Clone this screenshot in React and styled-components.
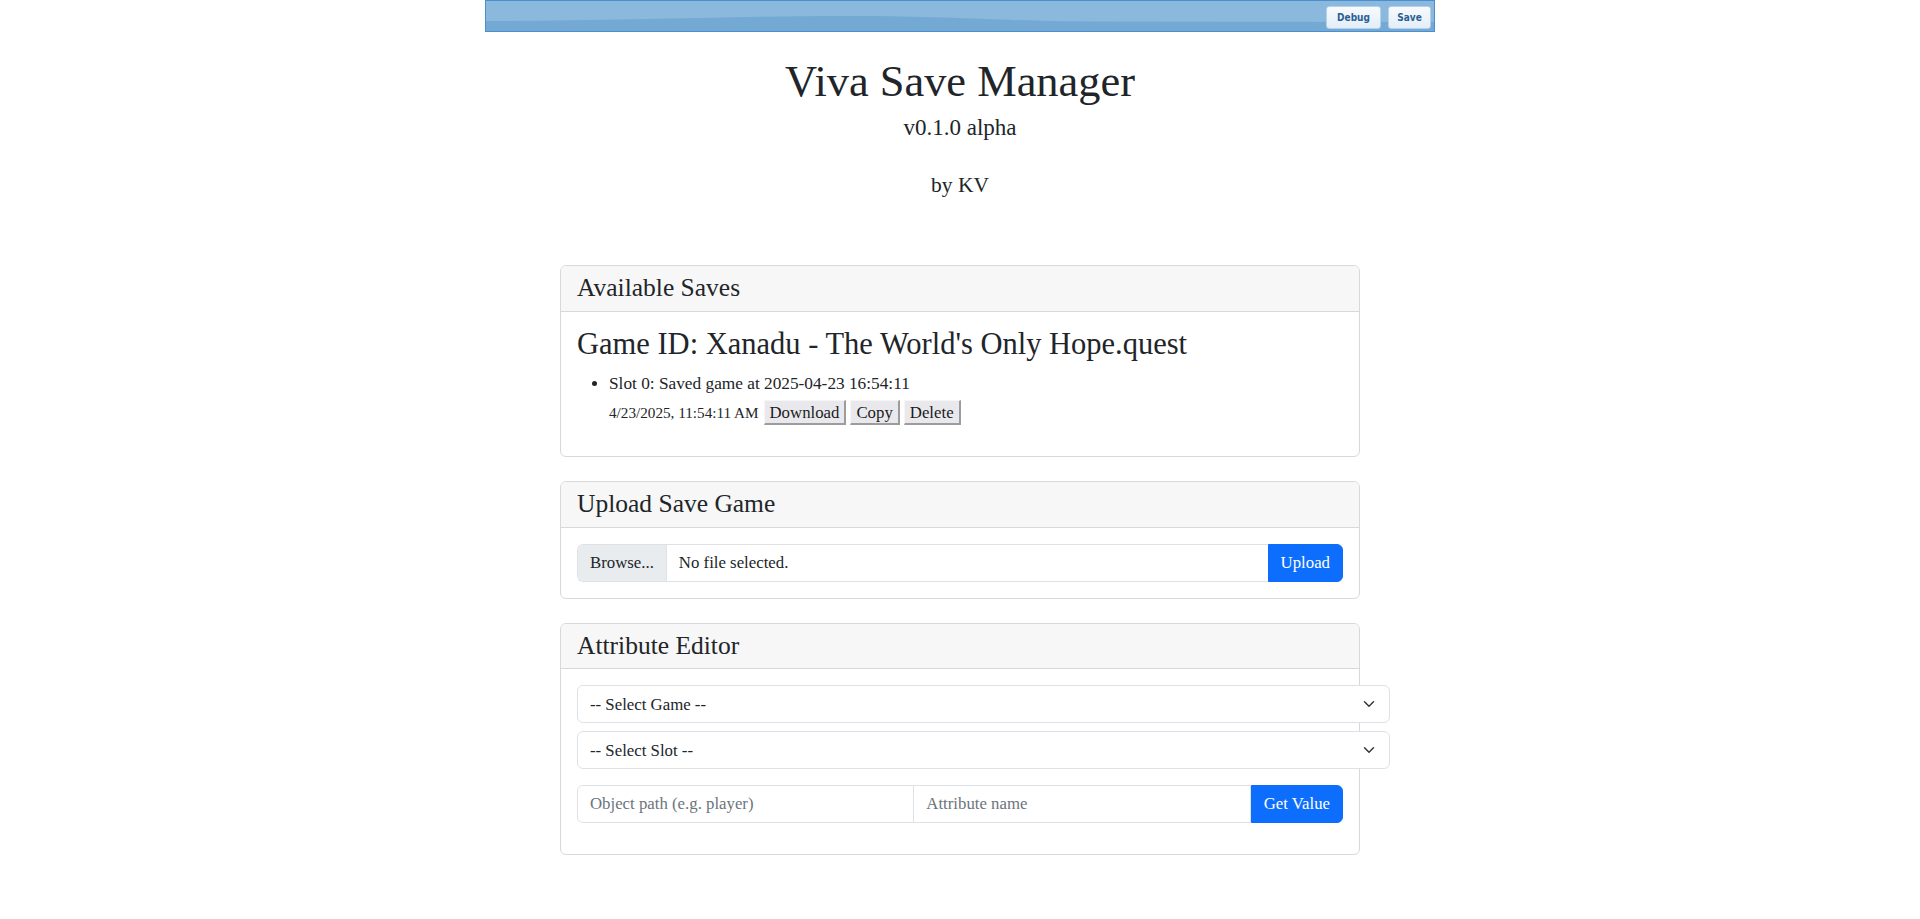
import React from "react";
import styled, { createGlobalStyle } from "styled-components";

const SERIF = '"Liberation Serif", "DejaVu Serif", serif';

const GlobalStyle = createGlobalStyle`
  html, body { margin: 0; padding: 0; background: #fff; }
  body {
    font-family: ${SERIF};
    font-size: 16.8px;
    line-height: 24px;
    color: #212529;
  }
  * { box-sizing: border-box; }
`;

const wave = `url("data:image/svg+xml,%3Csvg xmlns='http://www.w3.org/2000/svg' viewBox='0 0 950 30' preserveAspectRatio='none'%3E%3Crect width='950' height='30' fill='%238bb9dd'/%3E%3Cpath d='M0 20 C 120 20 250 15 363 15 S 520 20.5 606 20.5 L 950 21 V30 H0Z' fill='%2373a9d3'/%3E%3C/svg%3E")`;

const TopBar = styled.div`
  width: 950px;
  height: 32px;
  margin: 0 auto;
  border: 1px solid #4a8fd2;
  background: ${wave};
  background-size: 100% 100%;
  display: flex;
  justify-content: flex-end;
  align-items: flex-start;
  gap: 7px;
  padding: 5px 3px 0 0;
`;

const BarButton = styled.button`
  height: 23px;
  width: ${(p) => p.$w}px;
  padding: 0;
  border: 1px solid #b6d0e8;
  border-radius: 3px;
  background: linear-gradient(#f7fafd, #e3eef8);
  color: #2b5f92;
  font-family: "DejaVu Sans Condensed", "Liberation Sans Narrow", "DejaVu Sans", sans-serif;
  font-weight: bold;
  font-size: 10px;
  line-height: 1;
  cursor: pointer;
`;

const Header = styled.header`
  text-align: center;
  padding-top: 25px;
`;

const Title = styled.h1`
  margin: 0 0 8px;
  font-size: 44.4px;
  line-height: 48px;
  font-weight: 400;
`;

const SubLine = styled.p`
  margin: 0 0 ${(p) => p.$mb}px;
  font-size: ${(p) => p.$size}px;
  line-height: 30px;
`;

const Container = styled.main`
  width: 800px;
  margin: 65px auto 0;
`;

const Card = styled.section`
  border: 1px solid #d6d8da;
  border-radius: 6px;
  margin-bottom: 24px;
  background: #fff;
`;

const CardHeader = styled.div`
  padding: 8px 16px;
  background: #f7f7f7;
  border-bottom: 1px solid #d6d8da;
  border-radius: 5px 5px 0 0;
`;

const CardTitle = styled.h4`
  margin: 0;
  font-size: 25.5px;
  line-height: 28.8px;
  font-weight: 400;
`;

const CardBody = styled.div`
  padding: 16px;
`;

const GameTitle = styled.h3`
  margin: 0 0 11px;
  font-size: 30.5px;
  line-height: 33.6px;
  font-weight: 400;
`;

const SlotList = styled.ul`
  margin: 0 0 14.5px;
  padding-left: 32px;
`;

const SlotItem = styled.li`
  font-size: 17.3px;
`;

const SlotActions = styled.div`
  display: flex;
  align-items: flex-end;
  gap: 4px;
  height: 29px;
`;

const DateText = styled.span`
  font-size: 15.2px;
  line-height: 24px;
  margin-right: 1px;
`;

const NativeButton = styled.button`
  font-family: inherit;
  font-size: 16.8px;
  line-height: 19px;
  height: 25px;
  padding: 1px 5px;
  background: #e9e9ed;
  color: #1b1b1b;
  border-style: solid;
  border-width: 1px 2px 2px 1px;
  border-color: #f6f6f6 #9c9c9c #9c9c9c #f6f6f6;
  cursor: pointer;
`;

const InputGroup = styled.div`
  display: flex;
  align-items: stretch;
  height: 38px;
  margin-bottom: ${(p) => p.$mb || 0}px;
`;

const FileBox = styled.div`
  flex: 1 1 auto;
  display: flex;
  border: 1px solid #dee2e6;
  border-right: none;
  border-radius: 6px 0 0 6px;
  overflow: hidden;
`;

const BrowseLabel = styled.span`
  display: flex;
  align-items: center;
  padding: 0 12px;
  background: #e9ecef;
  border-right: 1px solid #dee2e6;
`;

const FileName = styled.span`
  display: flex;
  align-items: center;
  padding: 0 12px;
`;

const PrimaryButton = styled.button`
  flex: 0 0 auto;
  font-family: inherit;
  font-size: 16.8px;
  padding: 0 12px;
  background: #0d6efd;
  color: #fff;
  border: 1px solid #0d6efd;
  border-radius: 0 6px 6px 0;
  cursor: pointer;
`;

const chevron = `url("data:image/svg+xml,%3csvg xmlns='http://www.w3.org/2000/svg' viewBox='0 0 16 16'%3e%3cpath fill='none' stroke='%23343a40' stroke-linecap='round' stroke-linejoin='round' stroke-width='2' d='m2 5 6 6 6-6'/%3e%3c/svg%3e")`;

const Select = styled.select`
  display: block;
  width: 813px;
  height: 38px;
  margin-bottom: 8px;
  padding: 6px 36px 6px 12px;
  font-family: inherit;
  font-size: 16.8px;
  color: #212529;
  background: #fff ${chevron} no-repeat right 12px center / 16px 12px;
  border: 1px solid #dee2e6;
  border-radius: 6px;
  appearance: none;
`;

const FieldRow = styled(InputGroup)`
  margin-top: 16px;
`;

const TextInput = styled.input`
  flex: 1 1 0;
  min-width: 0;
  padding: 6px 12px;
  font-family: inherit;
  font-size: 16.8px;
  color: #212529;
  border: 1px solid #dee2e6;
  margin-right: ${(p) => (p.$first ? "-1px" : "0")};
  border-radius: ${(p) => (p.$first ? "6px 0 0 6px" : "0")};
  background: #fff;
  &::placeholder { color: #6c757d; opacity: 1; }
`;

export default function App() {
  return (
    <>
      <GlobalStyle />
      <TopBar>
        <BarButton $w={55}>Debug</BarButton>
        <BarButton $w={43}>Save</BarButton>
      </TopBar>
      <Header>
        <Title>Viva Save Manager</Title>
        <SubLine $mb={27} $size={23}>v0.1.0 alpha</SubLine>
        <SubLine $mb={0} $size={21.5}>by KV</SubLine>
      </Header>
      <Container>
        <Card>
          <CardHeader>
            <CardTitle>Available Saves</CardTitle>
          </CardHeader>
          <CardBody>
            <GameTitle>Game ID: Xanadu - The World's Only Hope.quest</GameTitle>
            <SlotList>
              <SlotItem>
                Slot 0: Saved game at 2025-04-23 16:54:11
                <SlotActions>
                  <DateText>4/23/2025, 11:54:11 AM</DateText>
                  <NativeButton>Download</NativeButton>
                  <NativeButton>Copy</NativeButton>
                  <NativeButton>Delete</NativeButton>
                </SlotActions>
              </SlotItem>
            </SlotList>
          </CardBody>
        </Card>
        <Card>
          <CardHeader>
            <CardTitle>Upload Save Game</CardTitle>
          </CardHeader>
          <CardBody>
            <InputGroup>
              <FileBox>
                <BrowseLabel>Browse...</BrowseLabel>
                <FileName>No file selected.</FileName>
              </FileBox>
              <PrimaryButton>Upload</PrimaryButton>
            </InputGroup>
          </CardBody>
        </Card>
        <Card>
          <CardHeader>
            <CardTitle>Attribute Editor</CardTitle>
          </CardHeader>
          <CardBody>
            <Select defaultValue="">
              <option value="">-- Select Game --</option>
            </Select>
            <Select defaultValue="">
              <option value="">-- Select Slot --</option>
            </Select>
            <FieldRow $mb={15}>
              <TextInput $first placeholder="Object path (e.g. player)" />
              <TextInput placeholder="Attribute name" />
              <PrimaryButton>Get Value</PrimaryButton>
            </FieldRow>
          </CardBody>
        </Card>
      </Container>
    </>
  );
}
